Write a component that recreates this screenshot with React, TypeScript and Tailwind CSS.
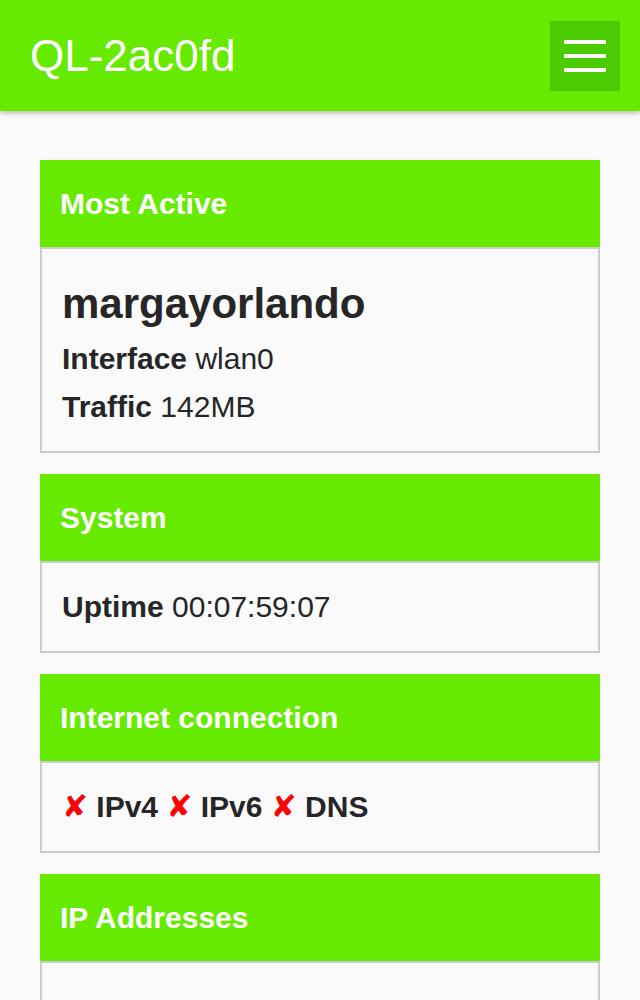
import React from "react";

const font = { fontFamily: "'Liberation Sans', Arial, Helvetica, sans-serif" };

function Card({ title, children }: { title: string; children: React.ReactNode }) {
  return (
    <div className="mb-[21px]">
      <div className="h-[87px] leading-[87px] bg-[#66eb00] pl-[20px] text-white font-bold text-[30px]">
        {title}
      </div>
      <div className="border-2 border-[#cccccc] bg-[#fafafa] px-[20px] py-[20px] text-[30px] leading-[48px] text-[#262626]">
        {children}
      </div>
    </div>
  );
}

function X() {
  return (
    <span className="text-[#ff0000] text-[31px] leading-none" style={{ fontFamily: "'DejaVu Sans', sans-serif" }}>
      ✘
    </span>
  );
}

export default function App() {
  return (
    <div className="min-h-[1000px] bg-[#fafafa]" style={font}>
      <header className="relative z-10 flex h-[111px] items-center justify-between bg-[#66eb00] pl-[30px] pr-[20px] shadow-[0_2px_5px_rgba(0,0,0,0.28)]">
        <div className="text-[44px] text-white">QL-2ac0fd</div>
        <button className="flex h-[70px] w-[70px] flex-col items-center justify-center gap-[10px] bg-[#4bcc00]">
          <span className="block h-[4px] w-[42px] bg-white" />
          <span className="block h-[4px] w-[42px] bg-white" />
          <span className="block h-[4px] w-[42px] bg-white" />
        </button>
      </header>
      <main className="px-[40px] pt-[49px]">
        <Card title="Most Active">
          <div className="pt-[11px] pb-[8px] text-[42px] font-bold leading-[47px]">margayorlando</div>
          <div>
            <b>Interface</b> wlan0
          </div>
          <div>
            <b>Traffic</b> 142MB
          </div>
        </Card>
        <Card title="System">
          <div>
            <b>Uptime</b> 00:07:59:07
          </div>
        </Card>
        <Card title="Internet connection">
          <div className="h-[48px] overflow-hidden font-bold">
            <X /> IPv4 <X /> IPv6 <X /> DNS
          </div>
        </Card>
        <Card title="IP Addresses">
          <div className="h-[120px]" />
        </Card>
      </main>
    </div>
  );
}
